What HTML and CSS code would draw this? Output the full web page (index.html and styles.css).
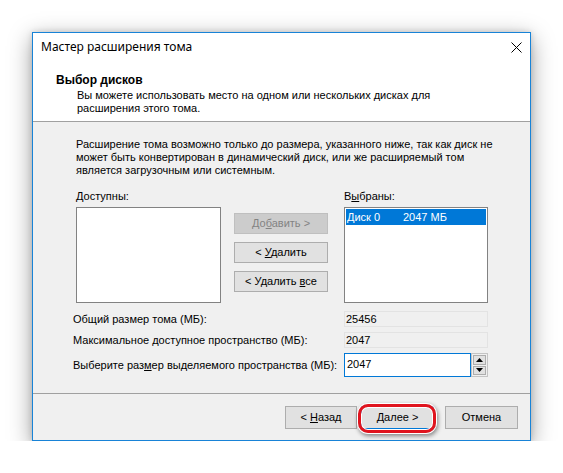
FILE: index.html
```html
<!DOCTYPE html>
<html lang="ru">
<head>
<meta charset="utf-8">
<title>Мастер расширения тома</title>
<link rel="stylesheet" href="styles.css">
</head>
<body>
<div class="window">
  <div class="titlebar">
    <span class="title">Мастер расширения тома</span>
    <svg class="close" width="11" height="11" viewBox="0 0 11 11"><path d="M0.5 0.5L10.5 10.5M10.5 0.5L0.5 10.5" stroke="#000" stroke-width="1" fill="none"/></svg>
  </div>
  <div class="header">
    <div class="h-title">Выбор дисков</div>
    <div class="h-desc">Вы можете использовать место на одном или нескольких дисках для<br>расширения этого тома.</div>
  </div>
  <div class="body">
    <p class="intro">Расширение тома возможно только до размера, указанного ниже, так как диск не<br>может быть конвертирован в динамический диск, или же расширяемый том<br>является загрузочным или системным.</p>
    <div class="lists">
      <div class="col col-left">
        <div class="label"><u>Д</u>оступны:</div>
        <div class="listbox"></div>
      </div>
      <div class="btns">
        <div class="btn disabled"><span>До<u>б</u>авить &gt;</span></div>
        <div class="btn"><span>&lt; <u>У</u>далить</span></div>
        <div class="btn"><span>&lt; Удалить <u>в</u>се</span></div>
      </div>
      <div class="col col-right">
        <div class="label">В<u>ы</u>браны:</div>
        <div class="listbox">
          <div class="item sel"><span class="i-name">Диск 0</span><span>2047 МБ</span></div>
        </div>
      </div>
    </div>
    <div class="fields">
      <span class="flabel">Общий размер тома (МБ):</span>
      <div class="ro">25456</div>
      <span class="flabel">Максимальное доступное пространство (МБ):</span>
      <div class="ro">2047</div>
      <span class="flabel">Выберите раз<u>м</u>ер выделяемого пространства (МБ):</span>
      <div class="spin">
        <div class="edit">2047</div>
        <div class="spinbtns">
          <div class="sbtn"><svg width="7" height="4" viewBox="0 0 7 4"><path d="M0 4L3.5 0L7 4Z" fill="#000"/></svg></div>
          <div class="sbtn"><svg width="7" height="4" viewBox="0 0 7 4"><path d="M0 0L3.5 4L7 0Z" fill="#000"/></svg></div>
        </div>
      </div>
    </div>
  </div>
  <div class="footer">
    <div class="btn fbtn back"><span>&lt; <u>Н</u>азад</span></div>
    <div class="btn fbtn next default"><span><u>Д</u>алее &gt;</span><span class="ring"></span></div>
    <div class="btn fbtn cancel"><span>Отмена</span></div>
  </div>
</div>
</body>
</html>
```

FILE: styles.css
```css
html, body {
  margin: 0;
  padding: 0;
  background: #ffffff;
}
body {
  padding: 32px 0 0 32px;
  font-family: "Liberation Sans", Arial, sans-serif;
  font-size: 11px;
  color: #000;
}
.window {
  width: 499px;
  height: 409px;
  box-sizing: border-box;
  border: 1px solid #1883d7;
  background: #f0f0f0;
  display: flex;
  flex-direction: column;
  box-shadow: 0 6px 22px rgba(0, 0, 0, 0.38), 0 0 6px rgba(0, 0, 0, 0.15);
}
.titlebar {
  height: 29px;
  background: #fff;
  display: flex;
  align-items: center;
  justify-content: space-between;
  padding: 0 8px 0 8px;
  flex: none;
}
.title {
  font-family: "Noto Sans", "Liberation Sans", sans-serif;
  font-size: 12px;
  line-height: 16px;
  margin-top: -1px;
}
.close {
  display: block;
  margin-top: -1px;
}
.header {
  height: 60px;
  box-sizing: border-box;
  background: #fff;
  border-bottom: 1px solid #a0a0a0;
  padding: 12px 0 0 23px;
  flex: none;
}
.h-title {
  font-weight: bold;
  font-size: 12px;
  line-height: 13px;
}
.h-desc {
  margin: 2px 0 0 21px;
  line-height: 13px;
  white-space: nowrap;
}
.body {
  padding: 16px 0 16px 43px;
  border-bottom: 1px solid #a0a0a0;
  flex: none;
}
.intro {
  margin: 0;
  line-height: 13px;
  white-space: nowrap;
}
.lists {
  display: flex;
  margin-top: 13px;
}
.col-left {
  width: 145px;
}
.col-right {
  width: 144px;
  margin-left: 16px;
}
.label {
  line-height: 13px;
  margin-bottom: 4px;
}
.listbox {
  height: 96px;
  box-sizing: border-box;
  border: 1px solid #828282;
  background: #fff;
  padding: 1px;
}
.item {
  height: 16px;
  line-height: 16px;
  padding-left: 1px;
  display: flex;
  white-space: nowrap;
}
.item.sel {
  background: #0078d7;
  color: #fff;
}
.i-name {
  width: 56px;
}
.btns {
  width: 94px;
  margin: 23px 0 0 13px;
  display: flex;
  flex-direction: column;
  gap: 8px;
}
.btn {
  height: 21px;
  box-sizing: border-box;
  border: 1px solid #adadad;
  background: #e1e1e1;
  display: flex;
  align-items: center;
  justify-content: center;
  line-height: 13px;
  white-space: nowrap;
}
.btn.disabled {
  background: #cccccc;
  border-color: #bfbfbf;
  color: #838383;
}
.fields {
  margin: 8px 0 0 -3px;
  display: grid;
  grid-template-columns: 271px 144px;
  grid-template-rows: 16px 16px 24px;
  row-gap: 5px;
  align-items: center;
}
.flabel {
  line-height: 13px;
  white-space: nowrap;
}
.ro {
  height: 16px;
  box-sizing: border-box;
  border: 1px solid #e3e3e3;
  background: #f0f0f0;
  line-height: 14px;
  padding-left: 1px;
}
.spin {
  display: flex;
  height: 24px;
}
.edit {
  width: 127px;
  box-sizing: border-box;
  border: 1px solid #0078d7;
  background: #fff;
  line-height: 20px;
  padding-left: 2px;
}
.spinbtns {
  width: 17px;
  box-sizing: border-box;
  border: 1px solid #c4c4c4;
  background: #f0f0f0;
  padding: 1px;
  display: flex;
  flex-direction: column;
  gap: 1px;
}
.sbtn {
  flex: 1;
  border: 1px solid #adadad;
  background: #e1e1e1;
  display: flex;
  align-items: center;
  justify-content: center;
}
.sbtn svg {
  display: block;
}
.footer {
  flex: 1;
  display: flex;
  align-items: flex-start;
  padding: 12px 0 0 252px;
}
.fbtn {
  height: 23px;
}
.back {
  width: 72px;
}
.next {
  width: 73px;
  margin-left: 4px;
  position: relative;
}
.next.default {
  border-color: #0078d7;
}
.cancel {
  width: 73px;
  margin-left: 11px;
}
.ring {
  position: absolute;
  left: -4px;
  top: -3px;
  right: -3px;
  bottom: -5px;
  border: 3px solid #e0141e;
  border-radius: 10px;
  box-shadow: 0 0 0 1px #fff, inset 0 0 0 1px #fff, 1px 2px 4px 1px rgba(0, 0, 0, 0.45);
}
```
